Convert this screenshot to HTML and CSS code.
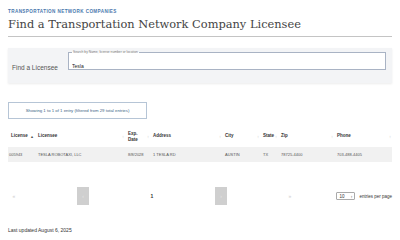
FILE: index.html
```html
<!DOCTYPE html>
<html lang="en">
<head>
  <meta charset="UTF-8">
  <title>Find a Transportation Network Company Licensee</title>
  <link rel="stylesheet" href="styles.css">
</head>
<body>

<header class="page-head">
  <p class="eyebrow">Transportation Network Companies</p>
  <h1 class="title">Find a Transportation Network Company Licensee</h1>
</header>

<!-- Search panel -->
<section class="search-panel">
  <label class="search-label" for="q">Find a Licensee</label>
  <fieldset class="search-field">
    <legend>Search by Name, license number or location</legend>
    <input id="q" type="text" value="Tesla">
  </fieldset>
</section>

<div class="info-box">Showing 1 to 1 of 1 entry (filtered from 29 total entries)</div>

<table class="results">
  <colgroup>
    <col style="width:27px"><col style="width:90px"><col style="width:25px"><col style="width:72px">
    <col style="width:38px"><col style="width:18px"><col style="width:56px"><col style="width:58px">
  </colgroup>
  <thead>
    <tr>
      <th><span>License</span><i class="sort active">&#9652;</i></th>
      <th><span>Licensee</span><i class="sort">&#8597;</i></th>
      <th><span>Exp.<br>Date</span><i class="sort">&#8597;</i></th>
      <th><span>Address</span><i class="sort">&#8597;</i></th>
      <th><span>City</span><i class="sort">&#8597;</i></th>
      <th><span>State</span><i class="sort">&#8597;</i></th>
      <th><span>Zip</span><i class="sort">&#8597;</i></th>
      <th><span>Phone</span><i class="sort">&#8597;</i></th>
    </tr>
  </thead>
  <tbody>
    <tr>
      <td>005943</td>
      <td>TESLA ROBOTAXI, LLC</td>
      <td>8/8/2028</td>
      <td>1 TESLA RD</td>
      <td>AUSTIN</td>
      <td>TX</td>
      <td>78725-4400</td>
      <td>703-488-4405</td>
    </tr>
  </tbody>
</table>

<!-- Pagination -->
<div class="table-foot">
  <ul class="pager">
    <li class="muted">&laquo;</li>
    <li class="btn">&lsaquo;</li>
    <li class="current">1</li>
    <li class="btn">&rsaquo;</li>
    <li class="muted">&raquo;</li>
  </ul>
  <div class="per-page">
    <span class="select">10 <b>&#8597;</b></span>
    <span>entries per page</span>
  </div>
</div>

<p class="updated">Last updated August 6, 2025</p>

</body>
</html>
```

FILE: styles.css
```css
body {
  margin: 0;
  padding: 9px 8px 0;
  font-family: 'Liberation Sans', Arial, sans-serif;
  color: #333;
  background: #fff;
}

/* Heading */
.page-head {
  border-bottom: 1px solid #c4c4c4;
  padding-bottom: 4px;
}

.eyebrow {
  margin: 0;
  font-size: 4.6px;
  line-height: 5px;
  font-weight: bold;
  letter-spacing: 0.4px;
  color: #4a78ad;
  text-transform: uppercase;
}

.title {
  margin: 2px 0 0;
  font-family: 'DejaVu Serif', serif;
  font-weight: normal;
  font-size: 11.4px;
  line-height: 16px;
  color: #444;
}

/* Search panel */
.search-panel {
  margin-top: 11px;
  height: 35px;
  box-sizing: border-box;
  display: flex;
  align-items: flex-start;
  padding: 3px 6px 0 4px;
  background: #f3f4f6;
  box-shadow: 0 1px 2px rgba(0, 0, 0, 0.08);
}

.search-label {
  width: 56px;
  font-size: 6.5px;
  line-height: 8px;
  color: #555;
  margin-top: 13px;
}

.search-field {
  flex: 1;
  margin: 0;
  padding: 0 3px;
  height: 19px;
  box-sizing: border-box;
  border: 1px solid #a9b3c4;
  background: #fff;
}

.search-field legend {
  padding: 0 1px;
  font-size: 3.3px;
  line-height: 3px;
  color: #777;
}

.search-field input {
  border: none;
  outline: none;
  padding: 0;
  margin-top: 1px;
  width: 100%;
  font-family: 'Liberation Sans', Arial, sans-serif;
  font-size: 5px;
  color: #222;
  background: transparent;
}

/* Info box */
.info-box {
  margin-top: 19px;
  width: 139px;
  height: 17px;
  box-sizing: border-box;
  display: flex;
  align-items: center;
  justify-content: center;
  border: 1px solid #b6c5d6;
  font-size: 4.3px;
  color: #3d5f86;
}

/* Results table */
.results {
  margin-top: 7px;
  width: 384px;
  table-layout: fixed;
  border-collapse: collapse;
}

.results th {
  position: relative;
  height: 21px;
  padding: 0 0 0 3px;
  font-size: 4.5px;
  line-height: 6px;
  font-weight: 600;
  color: #333;
  text-align: left;
}

.results th span {
  display: inline-block;
  vertical-align: middle;
}

.sort {
  position: absolute;
  right: 1px;
  top: 50%;
  transform: translateY(-50%);
  font-style: normal;
  font-size: 4px;
  color: #c8c8c8;
}

.sort.active {
  right: auto;
  left: 23px;
  color: #555;
}

.results td {
  height: 15px;
  padding: 0 0 0 3px;
  background: #f1f1f1;
  font-size: 4px;
  color: #555;
  white-space: nowrap;
}

.results td:first-child {
  padding-left: 1px;
}

/* Footer: pager + page size */
.table-foot {
  margin-top: 25px;
  display: flex;
  align-items: center;
}

.pager {
  margin: 0;
  padding: 0;
  list-style: none;
  display: flex;
  align-items: center;
  gap: 57px;
}

.pager li {
  width: 12px;
  height: 18px;
  display: flex;
  align-items: center;
  justify-content: center;
  font-size: 5px;
}

.pager .muted {
  color: #ccc;
}

.pager .btn {
  background: #cfcfcf;
  color: #e6e6e6;
}

.pager .current {
  font-weight: bold;
  color: #333;
}

.per-page {
  margin-left: auto;
  display: flex;
  align-items: center;
  gap: 4px;
  font-size: 4.5px;
  color: #333;
}

.select {
  width: 19px;
  height: 8px;
  box-sizing: border-box;
  padding: 0 2px;
  display: flex;
  align-items: center;
  justify-content: space-between;
  border: 1px solid #aaa;
  border-radius: 1px;
}

.select b {
  font-weight: normal;
  font-size: 4px;
}

.updated {
  margin: 22px 0 0;
  font-size: 5px;
  color: #333;
}
```
